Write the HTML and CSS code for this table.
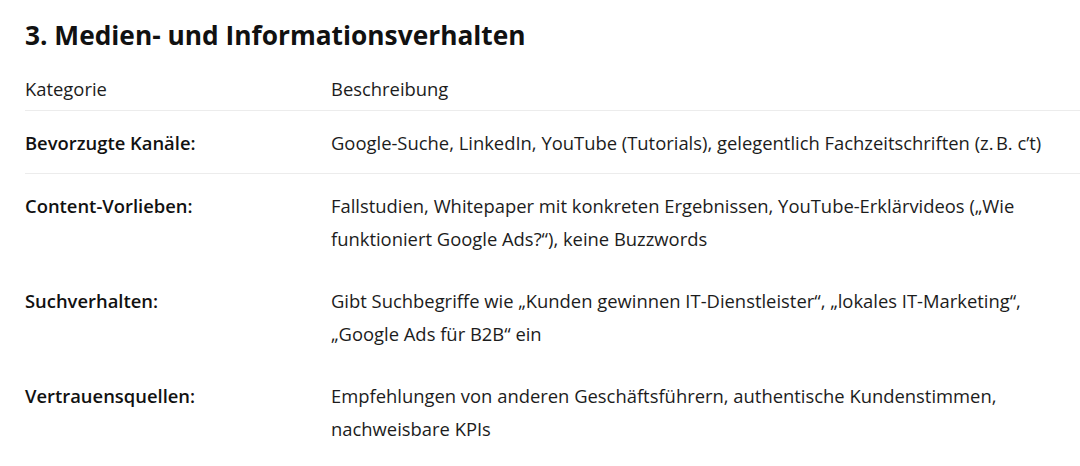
FILE: index.html
```html
<!DOCTYPE html>
<html lang="de">
<head>
<meta charset="utf-8">
<link rel="stylesheet" href="styles.css">
</head>
<body>
<main class="page">
  <h2 class="title">3. Medien- und Informationsverhalten</h2>
  <div class="table">
    <div class="row head">
      <div class="cell">Kategorie</div>
      <div class="cell">Beschreibung</div>
    </div>
    <div class="row bordered">
      <div class="cell label">Bevorzugte Kanäle:</div>
      <div class="cell">Google-Suche, LinkedIn, YouTube (Tutorials), gelegentlich Fachzeitschriften (z.&#8239;B. c’t)</div>
    </div>
    <div class="row">
      <div class="cell label">Content-Vorlieben:</div>
      <div class="cell">Fallstudien, Whitepaper mit konkreten Ergebnissen, YouTube-Erklärvideos („Wie funktioniert Google Ads?“), keine Buzzwords</div>
    </div>
    <div class="row">
      <div class="cell label">Suchverhalten:</div>
      <div class="cell">Gibt Suchbegriffe wie „Kunden gewinnen IT-Dienstleister“, „lokales IT-Marketing“, „Google Ads für B2B“ ein</div>
    </div>
    <div class="row">
      <div class="cell label">Vertrauensquellen:</div>
      <div class="cell">Empfehlungen von anderen Geschäftsführern, authentische Kundenstimmen, nachweisbare KPIs</div>
    </div>
  </div>
</main>
</body>
</html>
```

FILE: styles.css
```css
html, body {
  margin: 0;
  padding: 0;
  background: #ffffff;
}
body {
  font-family: "Open Sans", "Noto Sans", sans-serif;
  color: #1c1c1c;
}
.page {
  padding: 17px 0 0 25px;
}
.title {
  margin: 0;
  font-size: 26.3px;
  line-height: 36px;
  font-weight: 700;
  color: #111;
}
.table {
  margin-top: 19px;
}
.row {
  display: grid;
  grid-template-columns: 306px 1fr;
  padding: 15px 20px 14px 0;
  font-size: 18.4px;
  line-height: 33px;
}
.row.head {
  padding: 0 20px 5px 0;
  border-bottom: 1px solid #ececec;
}
.row.bordered {
  border-bottom: 1px solid #ececec;
}
.label {
  font-weight: 600;
  color: #111;
}
```
